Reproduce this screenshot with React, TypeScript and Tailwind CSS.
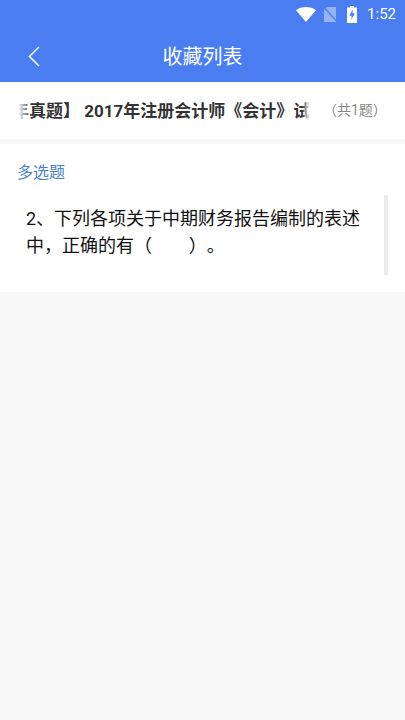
const cjk = { fontFamily: '"Roboto", "Noto Sans CJK SC", sans-serif' };

function StatusBar() {
  return (
    <div className="flex h-[28px] items-center justify-end pr-[9px] text-white">
      {/* wifi */}
      <svg width="20" height="15" viewBox="0 0 20 15" className="mr-[7px]">
        <path d="M0 3.300C2.800 1.100 6.200 0 10 0s7.200 1.100 10 3.300L10 15z" fill="#fff" />
      </svg>
      {/* no sim */}
      <svg width="14" height="15" viewBox="0 0 14 15" className="mr-[10px]">
        <path d="M4 0H13V15H1V3z" fill="#fff" fillOpacity="0.42" />
        <path d="M1 0.500L14 14.500" stroke="#4a7df0" strokeWidth="1.300" />
      </svg>
      {/* battery charging */}
      <svg width="10" height="17" viewBox="0 0 10 17" className="mr-[10px]">
        <path d="M3 0h4v1.500H10V17H0V1.500H3z" fill="#fff" />
        <path d="M5.800 3.500L2.300 9.800h2.200v3.700L7.800 7.300H5.500z" fill="#4a7df0" />
      </svg>
      <span className="text-[15px] leading-none" style={{ fontFamily: 'Roboto, sans-serif' }}>1:52</span>
    </div>
  );
}

export default function App() {
  return (
    <div className="flex min-h-[720px] flex-col bg-[#f8f8f8] [text-spacing-trim:space-all]" style={cjk}>
      <div className="h-[82px] bg-[#4a7df0]">
        <StatusBar />
        <div className="relative flex h-[54px] items-center justify-center pt-[3px]">
          <svg width="12" height="21" viewBox="0 0 12 21" className="absolute left-[28px] top-[18px]" fill="none">
            <path d="M11 1L1.500 10.500L11 20" stroke="#fff" strokeWidth="1.500" />
          </svg>
          <span className="text-[20px] leading-none text-white">收藏列表</span>
        </div>
      </div>

      <div className="flex h-[57px] items-center bg-white pl-[18px]">
        <div className="relative w-[292px] overflow-hidden">
          <div className="ml-[-6px] whitespace-nowrap text-[17px] font-bold leading-[24px] text-[#333333]">
            年真题】 2017年注册会计师《会计》试
          </div>
          <div className="absolute inset-y-0 left-0 w-[14px] bg-gradient-to-r from-white to-transparent" />
          <div className="absolute inset-y-0 right-0 w-[8px] bg-gradient-to-l from-white to-transparent" />
        </div>
        <span className="ml-[13px] whitespace-nowrap text-[14px] text-[#888888]">（共1题）</span>
      </div>

      <div className="mt-[5px] h-[148px] bg-white">
        <div className="pl-[17px] pt-[18px] text-[16px] leading-[22px] text-[#4a7fc9]">多选题</div>
        <div className="mt-[11px] flex">
          <div className="ml-[26px] w-[340px] pt-[10px] text-[18px] leading-[27px] text-[#111111]">
            2、下列各项关于中期财务报告编制的表述中，正确的有（&emsp;&emsp;）。
          </div>
          <div className="ml-[18px] h-[80px] w-[4px] bg-[#ebebeb]" />
        </div>
      </div>
    </div>
  );
}
